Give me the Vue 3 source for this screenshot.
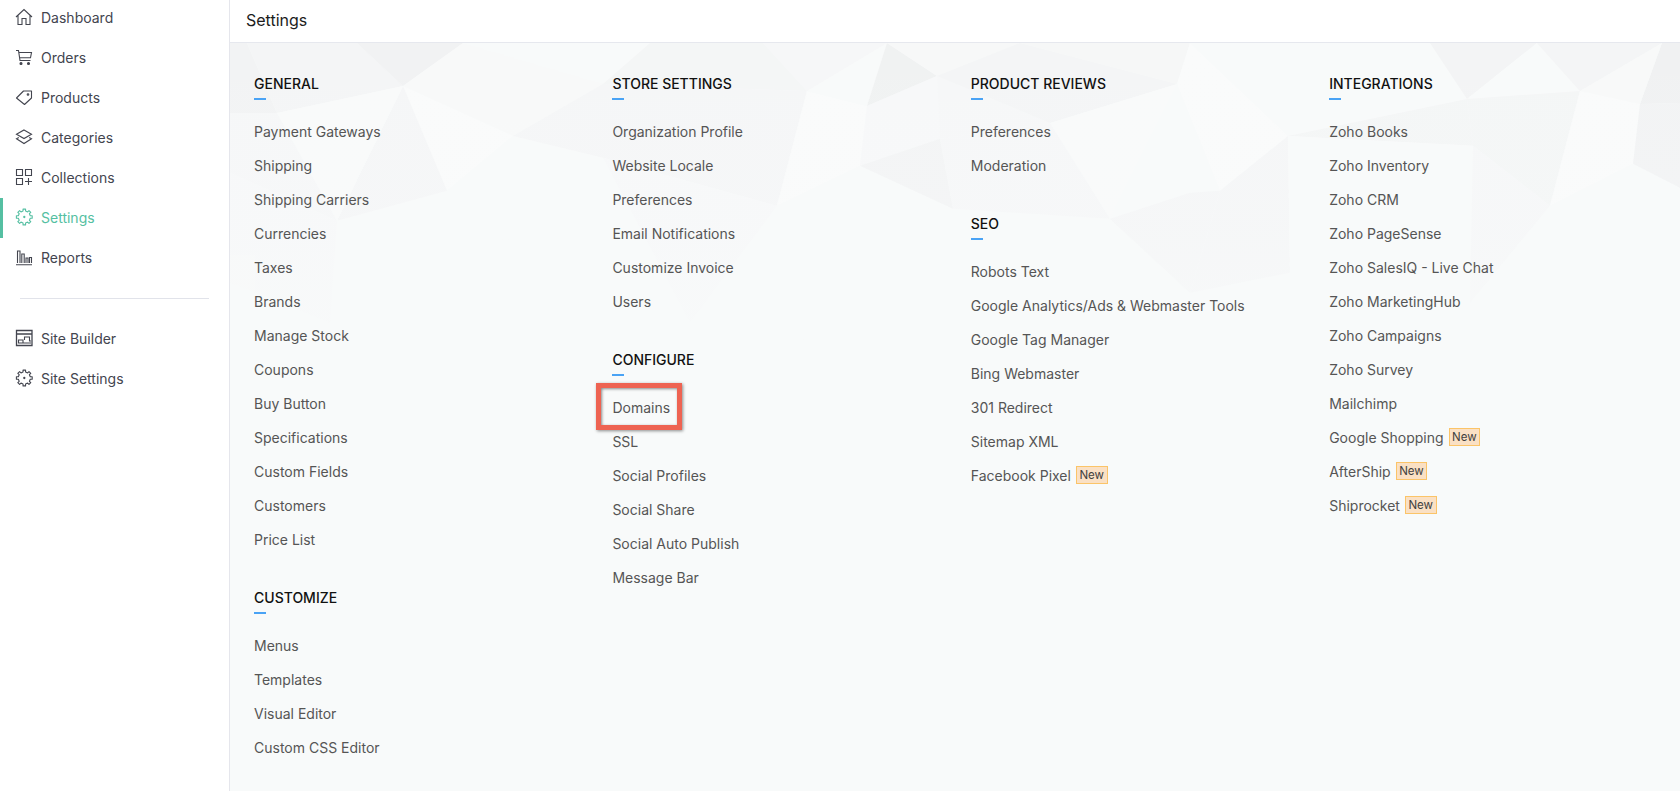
<script setup>
const nav = [
  { label: 'Dashboard', icon: 'home' },
  { label: 'Orders', icon: 'cart' },
  { label: 'Products', icon: 'tag' },
  { label: 'Categories', icon: 'layers' },
  { label: 'Collections', icon: 'grid' },
  { label: 'Settings', icon: 'gear', active: true },
  { label: 'Reports', icon: 'chart' }
]
const nav2 = [
  { label: 'Site Builder', icon: 'builder' },
  { label: 'Site Settings', icon: 'gear' }
]
function makeGear() {
  const pts = []
  const teeth = 8
  const step = (Math.PI * 2) / teeth
  for (let i = 0; i < teeth; i++) {
    const a = i * step - Math.PI / 2
    const seq = [[-0.5, 6], [-0.27, 6.1], [-0.2, 8], [0.2, 8], [0.27, 6.1], [0.5, 6]]
    for (const [o, r] of seq) {
      const t = a + o * step
      pts.push((9.300 + r * Math.cos(t)).toFixed(2) + ' ' + (9 + r * Math.sin(t)).toFixed(2))
    }
  }
  return 'M' + pts.join('L') + 'Z'
}
const gear = makeGear()
const columns = [
  [
    { title: 'GENERAL', items: ['Payment Gateways', 'Shipping', 'Shipping Carriers', 'Currencies', 'Taxes', 'Brands', 'Manage Stock', 'Coupons', 'Buy Button', 'Specifications', 'Custom Fields', 'Customers', 'Price List'] },
    { title: 'CUSTOMIZE', items: ['Menus', 'Templates', 'Visual Editor', 'Custom CSS Editor'] }
  ],
  [
    { title: 'STORE SETTINGS', items: ['Organization Profile', 'Website Locale', 'Preferences', 'Email Notifications', 'Customize Invoice', 'Users'] },
    { title: 'CONFIGURE', items: ['Domains', 'SSL', 'Social Profiles', 'Social Share', 'Social Auto Publish', 'Message Bar'] }
  ],
  [
    { title: 'PRODUCT REVIEWS', items: ['Preferences', 'Moderation'] },
    { title: 'SEO', items: ['Robots Text', 'Google Analytics/Ads & Webmaster Tools', 'Google Tag Manager', 'Bing Webmaster', '301 Redirect', 'Sitemap XML', 'Facebook Pixel*'] }
  ],
  [
    { title: 'INTEGRATIONS', items: ['Zoho Books', 'Zoho Inventory', 'Zoho CRM', 'Zoho PageSense', 'Zoho SalesIQ - Live Chat', 'Zoho MarketingHub', 'Zoho Campaigns', 'Zoho Survey', 'Mailchimp', 'Google Shopping*', 'AfterShip*', 'Shiprocket*'] }
  ]
]
const polys = [
  ['0,0 17,0 47,70 0,70', '#f1f2f3'],
  ['17,0 127,0 173,43 47,70', '#f3f4f5'],
  ['127,0 233,0 173,43', '#f0f1f2'],
  ['233,0 373,41 283,93 173,43', '#f8f9f9'],
  ['233,0 420,0 373,41', '#f9fafa'],
  ['173,43 283,93 217,148', '#fbfcfc'],
  ['173,43 217,148 107,178', '#f5f6f7'],
  ['47,70 173,43 107,178', '#fafbfb'],
  ['0,70 47,70 107,178 0,130', '#f6f7f8'],
  ['283,93 373,115 287,198 217,148', '#f9fafa'],
  ['283,93 373,41 373,115', '#f5f6f7'],
  ['420,0 533,0 577,48 373,41', '#f4f5f6'],
  ['533,0 657,0 577,48', '#f6f7f8'],
  ['373,41 577,48 547,163 373,115', '#f5f6f7'],
  ['577,48 637,63 630,123 547,163', '#fbfcfc'],
  ['577,48 657,0 637,63', '#f9fafa'],
  ['657,0 707,33 637,63', '#eff0f1'],
  ['657,0 790,0 707,33', '#f7f8f8'],
  ['637,63 707,33 710,96 630,123', '#f7f8f9'],
  ['630,123 710,96 723,166', '#f2f3f4'],
  ['707,33 820,80 710,96', '#f6f7f8'],
  ['790,0 947,41 820,80 707,33', '#f3f4f5'],
  ['790,0 960,0 947,41', '#f6f7f7'],
  ['820,80 947,41 880,176', '#fafbfb'],
  ['710,96 820,80 880,176 723,166', '#f6f7f8'],
  ['960,0 1058,93 990,148 947,41', '#fbfcfc'],
  ['960,0 1200,0 1237,56 1058,93', '#f9fafa'],
  ['1058,93 1237,56 1243,103', '#f4f5f6'],
  ['1200,0 1307,0 1237,56', '#f2f3f4'],
  ['1307,0 1350,48 1237,56', '#f9fafa'],
  ['1307,0 1432,0 1350,48', '#f3f4f5'],
  ['1432,0 1450,0 1450,60 1410,61', '#eeeff0'],
  ['1432,0 1410,61 1350,48', '#f8f9f9'],
  ['1237,56 1350,48 1320,163 1243,103', '#f4f5f6'],
  ['1350,48 1410,61 1403,121 1320,163', '#fbfcfc'],
  ['1410,61 1450,60 1450,145 1403,121', '#f1f2f3'],
  ['990,148 1058,93 1060,230 960,250', '#f5f6f7'],
  ['1058,93 1243,103 1180,180 1060,230', '#f9fafa'],
  ['1243,103 1320,163 1240,260', '#f6f7f8'],
  ['880,176 960,150 990,148 960,250', '#f5f6f7'],
  ['107,178 287,198 240,300 100,280', '#f9fafa'],
  ['0,130 107,178 100,280 0,240', '#f7f8f9'],
  ['547,163 723,166 640,280 560,300', '#f9fafa'],
  ['373,115 547,163 460,280', '#f7f8f9']
]
</script>

<template>
  <div class="page">
    <aside class="sidebar">
      <ul class="nav">
        <li v-for="n in nav" :key="n.label" class="nav-item" :class="{ active: n.active }">
          <svg class="ico" viewBox="0 0 18 18" fill="none" stroke="currentColor" stroke-width="1.100">
            <path v-if="n.icon === 'home'" d="M1 9 9 1.500 17 9M3 7.500V16.500H7V10.500H11V16.500H15V7.500" />
            <g v-else-if="n.icon === 'cart'">
              <path d="M1 2.500H3.500L5 12.500H15.500M4 4.500H16.500L15.500 9.800H4.700" />
              <circle cx="6" cy="15.500" r="1" fill="currentColor" />
              <circle cx="13.500" cy="15.500" r="1" fill="currentColor" />
            </g>
            <g v-else-if="n.icon === 'tag'">
              <path d="M1.500 10 8.500 3H16.500V10L9.500 16.500Z" stroke-linejoin="round" />
              <circle cx="13" cy="6.500" r=".8" />
            </g>
            <path v-else-if="n.icon === 'layers'" d="M9 2 16.500 6.300 9 10.500 1.500 6.300ZM3.800 9.500 1.500 10.800 9 15.500 16.500 10.800 14.200 9.500" />
            <path v-else-if="n.icon === 'grid'" d="M1.500 1.500H7.500V7.500H1.500ZM10.500 1.500H16.500V7.500H10.500ZM1.500 10.500H7.500V16.500H1.500ZM13.500 10V17M10 13.500H17" />
            <g v-else-if="n.icon === 'gear'">
              <path :d="gear" stroke-linejoin="round" />
              <circle cx="9.300" cy="9" r=".6" />
            </g>
            <path v-else-if="n.icon === 'chart'" d="M1 16.800H17M2.500 15V3H5V15M6.800 15V6H9.200V15M11 15V10H13V15M14.500 15V9.500H16.500V15" />
          </svg>
          <span>{{ n.label }}</span>
        </li>
      </ul>
      <hr class="rule" />
      <ul class="nav">
        <li v-for="n in nav2" :key="n.label" class="nav-item">
          <svg class="ico" viewBox="0 0 18 18" fill="none" stroke="currentColor" stroke-width="1.100">
            <g v-if="n.icon === 'builder'">
              <path d="M1.500 1.500H17V16.500H1.500ZM1.500 5H17" stroke-width="1.300" />
              <path d="M3.500 11H8V14H3.500ZM9.500 11V8H14.500V12H16M8 14H16" />
            </g>
            <g v-else>
              <path :d="gear" stroke-linejoin="round" />
              <circle cx="9.300" cy="9" r=".6" />
            </g>
          </svg>
          <span>{{ n.label }}</span>
        </li>
      </ul>
    </aside>

    <main class="main">
      <header class="topbar">Settings</header>
      <div class="content">
        <svg class="bg" viewBox="0 0 1450 749" preserveAspectRatio="none">
          <defs>
            <linearGradient id="fade" x1="0" y1="0" x2="0" y2="1">
              <stop offset="0" stop-color="#f8fafa" stop-opacity="0" />
              <stop offset=".25" stop-color="#f8fafa" stop-opacity=".2" />
              <stop offset=".48" stop-color="#f8fafa" stop-opacity="1" />
            </linearGradient>
          </defs>
          <g opacity=".78">
            <polygon v-for="(p, i) in polys" :key="i" :points="p[0]" :fill="p[1]" />
          </g>
          <rect x="0" y="0" width="1450" height="749" fill="url(#fade)" />
        </svg>
        <div class="grid">
          <div v-for="(col, c) in columns" :key="c" class="col">
            <section v-for="s in col" :key="s.title" class="section">
              <h3 class="head">{{ s.title }}</h3>
              <ul class="links">
                <li v-for="it in s.items" :key="it" class="link">
                  <span>{{ it.replace('*', '') }}</span>
                  <span v-if="it.endsWith('*')" class="new">New</span>
                  <i v-if="it === 'Domains'" class="mark"></i>
                </li>
              </ul>
            </section>
          </div>
        </div>
      </div>
    </main>
  </div>
</template>

<style>
html, body { margin: 0; overflow: hidden; }
</style>

<style scoped>
.page {
  display: flex;
  width: 1680px;
  height: 791px;
  overflow: hidden;
  font-family: Inter, "Liberation Sans", sans-serif;
  background: #fff;
}
ul { list-style: none; margin: 0; padding: 0; }
.sidebar {
  width: 229px;
  flex: none;
  border-right: 1px solid #e5e6ec;
}
.sidebar > .nav:first-child { margin-top: -2px; }
.nav-item {
  display: flex;
  align-items: center;
  height: 40px;
  box-sizing: border-box;
  padding: 0 0 2px 15px;
  color: #43454f;
  font-size: 14px;
  position: relative;
}
.nav-item.active { color: #55bfa2; }
.nav-item.active::before {
  content: "";
  position: absolute;
  left: 0; top: 0; bottom: 0;
  width: 3px;
  background: #55bfa2;
}
.ico { width: 18px; height: 18px; margin-right: 8px; flex: none; }
.rule {
  border: 0;
  border-top: 1px solid #e1e3ea;
  margin: 20px;
  width: 189px;
}
.main { flex: 1; min-width: 0; display: flex; flex-direction: column; }
.topbar {
  height: 43px;
  box-sizing: border-box;
  padding-left: 16px;
  line-height: 41px;
  font-size: 16px;
  color: #1c1c1c;
  background: #fff;
  border-bottom: 1px solid #e6e8ee;
  flex: none;
}
.content {
  position: relative;
  flex: 1;
  background: #f8fafa;
  overflow: hidden;
}
.bg { position: absolute; inset: 0; width: 100%; height: 100%; }
.grid {
  position: relative;
  display: grid;
  grid-template-columns: repeat(4, 358.400px);
  padding: 32px 0 0 24px;
}
.section + .section { margin-top: 33px; }
.head {
  margin: 0;
  font-size: 14px;
  font-weight: 500;
  line-height: 18px;
  color: #111;
  padding-bottom: 6px;
}
.head::after {
  content: "";
  display: block;
  width: 12px;
  height: 2px;
  background: #4aa3f5;
  margin-top: 5px;
}
.links { padding-top: 8px; }
.link {
  height: 34px;
  display: flex;
  align-items: center;
  font-size: 14px;
  color: #555;
  position: relative;
}
.new {
  margin-left: 5px;
  font-size: 11.500px;
  line-height: 16px;
  padding: 0 2.500px;
  color: #3f3f3f;
  background: #fae0c4;
  border: 1px solid #fbc468;
}
.mark {
  position: absolute;
  left: -16px;
  top: -7px;
  width: 86px;
  height: 47px;
  box-sizing: border-box;
  border: 5px solid #ee6352;
  box-shadow: 1px 1px 3px rgba(0,0,0,.45), inset 1px 1px 3px rgba(0,0,0,.45);
}
</style>
